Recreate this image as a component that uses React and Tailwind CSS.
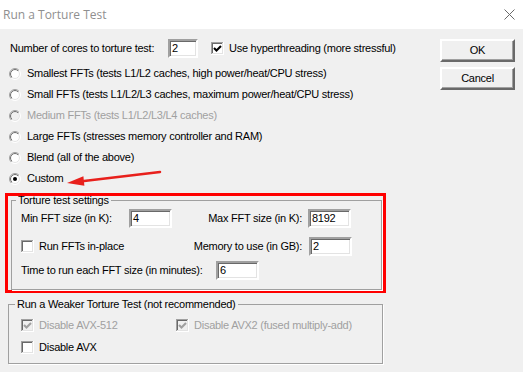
import React from "react";

function Input({ value, className }) {
  return (
    <div
      className={
        "h-[19px] bg-white border-2 border-t-[#a0a0a0] border-l-[#a0a0a0] border-b-white border-r-white shadow-[inset_1px_1px_0_#696969,inset_-1px_-1px_0_#e3e3e3] pl-[2px] flex items-center leading-none " +
        className
      }
    >
      {value}
    </div>
  );
}

function Checkbox({ checked, disabled }) {
  const fill = disabled ? "#f0f0f0" : "#ffffff";
  const mark = disabled ? "#a0a0a0" : "#000000";
  return (
    <svg width="13" height="13" viewBox="0 0 13 13" className="shrink-0 block">
      <rect x="0" y="0" width="13" height="13" fill="#ffffff" />
      <rect x="0" y="0" width="12" height="12" fill="#e3e3e3" />
      <rect x="0" y="0" width="12" height="1" fill="#a0a0a0" />
      <rect x="0" y="0" width="1" height="12" fill="#a0a0a0" />
      <rect x="1" y="1" width="10" height="1" fill="#696969" />
      <rect x="1" y="1" width="1" height="10" fill="#696969" />
      <rect x="2" y="2" width="9" height="9" fill={fill} />
      {checked && (
        <polyline
          points="3,6 5.5,8.5 10,4"
          fill="none"
          stroke={mark}
          strokeWidth="2.1"
        />
      )}
    </svg>
  );
}

function Radio({ checked, disabled }) {
  return (
    <svg width="12" height="12" viewBox="0 0 12 12" className="shrink-0 block">
      <circle cx="6" cy="6" r="4.2" fill={disabled ? "#f0f0f0" : "#ffffff"} />
      <circle cx="6" cy="6" r="4.5" fill="none" stroke="url(#radioInner)" strokeWidth="1" />
      <circle cx="6" cy="6" r="5.5" fill="none" stroke="url(#radioOuter)" strokeWidth="1" />
      {checked && <circle cx="6" cy="6" r="2" fill="#000" />}
    </svg>
  );
}

function Button({ children }) {
  return (
    <div className="w-[75px] h-[23px] bg-[#f0f0f0] border-2 border-t-white border-l-white border-b-[#696969] border-r-[#696969] shadow-[inset_-1px_-1px_0_#a0a0a0] flex items-center justify-center">
      {children}
    </div>
  );
}

function RadioRow({ label, checked, disabled }) {
  return (
    <div className="h-[21px] flex items-center">
      <div className="ml-[1px]">
        <Radio checked={checked} disabled={disabled} />
      </div>
      <span className={"ml-[6px] whitespace-nowrap " + (disabled ? "text-[#a0a0a0]" : "")}>
        {label}
      </span>
    </div>
  );
}

export default function App() {
  return (
    <div className="w-[523px] h-[372px] bg-[#f0f0f0] relative overflow-hidden font-['Liberation_Sans',Arial,sans-serif] text-[11px] tracking-[-0.25px] leading-[13px] text-black">
      <svg width="0" height="0" className="absolute">
        <defs>
          <linearGradient id="radioOuter" x1="0" y1="0" x2="1" y2="1">
            <stop offset="0.5" stopColor="#a0a0a0" />
            <stop offset="0.5" stopColor="#ffffff" />
          </linearGradient>
          <linearGradient id="radioInner" x1="0" y1="0" x2="1" y2="1">
            <stop offset="0.5" stopColor="#696969" />
            <stop offset="0.5" stopColor="#e3e3e3" />
          </linearGradient>
        </defs>
      </svg>

      {/* Title bar */}
      <div className="h-[29px] bg-white flex items-center justify-between pl-[3px] pr-[8px]">
        <span className="font-['Open_Sans','Noto_Sans',sans-serif] text-[12px] tracking-normal text-[#8f8f8f]">
          Run a Torture Test
        </span>
        <svg width="11" height="11" viewBox="0 0 11 11">
          <line x1="0.5" y1="0.5" x2="10.5" y2="10.5" stroke="#6a6a6a" strokeWidth="1" />
          <line x1="10.5" y1="0.5" x2="0.5" y2="10.5" stroke="#6a6a6a" strokeWidth="1" />
        </svg>
      </div>

      {/* Body */}
      <div className="flex justify-between">
        <div className="w-[420px] pl-[8px] pt-[10px]">
          <div className="h-[19px] flex items-center">
            <span className="ml-[2px] w-[158px] whitespace-nowrap">Number of cores to torture test:</span>
            <Input value="2" className="w-[30px]" />
            <div className="ml-[13px]">
              <Checkbox checked />
            </div>
            <span className="ml-[5px] whitespace-nowrap">Use hyperthreading (more stressful)</span>
          </div>

          <div className="mt-[5px]">
            <RadioRow label="Smallest FFTs (tests L1/L2 caches, high power/heat/CPU stress)" />
            <RadioRow label="Small FFTs (tests L1/L2/L3 caches, maximum power/heat/CPU stress)" />
            <RadioRow label="Medium FFTs (tests L1/L2/L3/L4 caches)" disabled />
            <RadioRow label="Large FFTs (stresses memory controller and RAM)" />
            <RadioRow label="Blend (all of the above)" />
            <RadioRow label="Custom" checked />
          </div>

          {/* Red annotation box around settings */}
          <div className="mt-[4px] -ml-[3px] w-[381px] border-[3px] border-[#ff0000] pl-[3px] pr-[1px]">
            <fieldset className="border border-[#a0a0a0] shadow-[1px_1px_0_#ffffff]">
              <legend className="ml-[4px] px-[2px] leading-[8px] whitespace-nowrap">Torture test settings</legend>
              <div className="pt-[5px] pb-[9px] pl-[9px] pr-[30px]">
                <div className="h-[19px] flex items-center">
                  <span className="w-[108px] whitespace-nowrap">Min FFT size (in K):</span>
                  <Input value="4" className="w-[43px]" />
                  <span className="flex-1 text-right pr-[6px] whitespace-nowrap">Max FFT size (in K):</span>
                  <Input value="8192" className="w-[43px]" />
                </div>
                <div className="mt-[9px] h-[19px] flex items-center">
                  <Checkbox />
                  <span className="ml-[5px] whitespace-nowrap">Run FFTs in-place</span>
                  <span className="flex-1 text-right pr-[7px] whitespace-nowrap">Memory to use (in GB):</span>
                  <Input value="2" className="w-[43px] -mr-[1px]" />
                </div>
                <div className="mt-[5px] h-[19px] flex items-center">
                  <span className="w-[195px] whitespace-nowrap">Time to run each FFT size (in minutes):</span>
                  <Input value="6" className="w-[43px]" />
                </div>
              </div>
            </fieldset>
          </div>

          <fieldset className="mt-[7px] w-[375px] border border-[#a0a0a0] shadow-[1px_1px_0_#ffffff]">
            <legend className="ml-[6px] px-[2px] leading-[8px] whitespace-nowrap">
              Run a Weaker Torture Test (not recommended)
            </legend>
            <div className="pt-[8px] pb-[7px] pl-[12px]">
              <div className="h-[18px] flex items-center">
                <div className="w-[155px] flex items-center">
                  <Checkbox checked disabled />
                  <span className="ml-[5px] text-[#a0a0a0] whitespace-nowrap">Disable AVX-512</span>
                </div>
                <div className="flex items-center">
                  <Checkbox checked disabled />
                  <span className="ml-[5px] text-[#a0a0a0] whitespace-nowrap">Disable AVX2 (fused multiply-add)</span>
                </div>
              </div>
              <div className="mt-[4px] h-[18px] flex items-center">
                <Checkbox />
                <span className="ml-[5px] whitespace-nowrap">Disable AVX</span>
              </div>
            </div>
          </fieldset>
        </div>

        <div className="pt-[10px] pr-[8px] flex flex-col gap-[5px]">
          <Button>OK</Button>
          <Button>Cancel</Button>
        </div>
      </div>

      {/* Red arrow annotation */}
      <svg
        width="523"
        height="372"
        viewBox="0 0 523 372"
        className="absolute left-0 top-0 pointer-events-none"
      >
        <line x1="160" y1="172" x2="84" y2="181" stroke="#e8201c" strokeWidth="2.5" strokeLinecap="round" />
        <polygon points="67,183 83.4,176.3 84.4,185.7" fill="#e8201c" />
      </svg>
    </div>
  );
}
